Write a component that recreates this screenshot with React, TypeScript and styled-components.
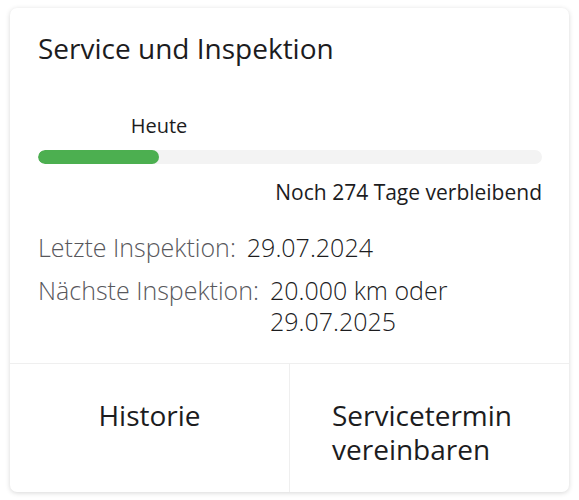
import React from 'react';
import styled, { createGlobalStyle } from 'styled-components';

const GlobalStyle = createGlobalStyle`
  html, body {
    margin: 0;
    padding: 0;
    background: #ffffff;
    font-family: "Open Sans", "Noto Sans", sans-serif;
    -webkit-font-smoothing: antialiased;
  }
`;

const Page = styled.div`
  padding: 8px 10px;
  width: 579px;
  box-sizing: border-box;
`;

const Card = styled.div`
  background: #fff;
  border-radius: 7px;
  box-shadow: 0 1px 5px rgba(0, 0, 0, 0.16);
  display: flex;
  flex-direction: column;
  height: 484px;
  overflow: hidden;
`;

const Body = styled.div`
  padding: 22px 27px 0 28px;
  flex: 1;
`;

const Title = styled.h2`
  margin: 0;
  font-size: 28px;
  line-height: 36px;
  font-weight: 400;
  color: #1c1c1e;
`;

const Progress = styled.div`
  margin-top: 46px;
`;

const MarkerRow = styled.div`
  position: relative;
  height: 27px;
`;

const Marker = styled.span`
  position: absolute;
  top: 0;
  transform: translateX(-50%);
  font-size: 20px;
  line-height: 27px;
  color: #1c1c1e;
  white-space: nowrap;
`;

const Track = styled.div`
  margin-top: 11px;
  height: 14px;
  border-radius: 7px;
  background: #f3f3f3;
  overflow: hidden;
`;

const Fill = styled.div`
  height: 100%;
  border-radius: 7px;
  background: #4caf50;
`;

const Remaining = styled.div`
  margin-top: 13px;
  text-align: right;
  font-size: 21px;
  line-height: 30px;
  color: #1c1c1e;
`;

const Details = styled.div`
  margin-top: 25px;
  display: flex;
  flex-direction: column;
  gap: 12px;
`;

const DetailRow = styled.div`
  display: flex;
  gap: 11px;
  font-size: 25px;
  line-height: 31px;
`;

const Label = styled.span`
  font-weight: 300;
  color: #58585c;
  white-space: nowrap;
`;

const Value = styled.span`
  font-weight: 350;
  color: #1c1c1e;
`;

const Actions = styled.div`
  display: grid;
  grid-template-columns: 279px 1fr;
  border-top: 1px solid #efefef;
  height: 128px;
`;

const Action = styled.button<{ $divider?: boolean }>`
  appearance: none;
  background: none;
  border: none;
  border-left: ${(p) => (p.$divider ? '1px solid #efefef' : 'none')};
  margin: 0;
  padding: 34px 42px 0;
  display: flex;
  justify-content: center;
  align-items: flex-start;
  font-family: inherit;
  font-size: 28px;
  line-height: 34px;
  color: #1c1c1e;
  text-align: left;
  cursor: pointer;
`;

const progress = 24;

export default function App() {
  return (
    <Page>
      <GlobalStyle />
      <Card>
        <Body>
          <Title>Service und Inspektion</Title>
          <Progress>
            <MarkerRow>
              <Marker style={{ left: `${progress}%` }}>Heute</Marker>
            </MarkerRow>
            <Track>
              <Fill style={{ width: `${progress}%` }} />
            </Track>
            <Remaining>Noch 274 Tage verbleibend</Remaining>
          </Progress>
          <Details>
            <DetailRow>
              <Label>Letzte Inspektion:</Label>
              <Value>29.07.2024</Value>
            </DetailRow>
            <DetailRow>
              <Label>Nächste Inspektion:</Label>
              <Value>20.000 km oder 29.07.2025</Value>
            </DetailRow>
          </Details>
        </Body>
        <Actions>
          <Action>
            <span>Historie</span>
          </Action>
          <Action $divider>
            <span>Servicetermin vereinbaren</span>
          </Action>
        </Actions>
      </Card>
    </Page>
  );
}
